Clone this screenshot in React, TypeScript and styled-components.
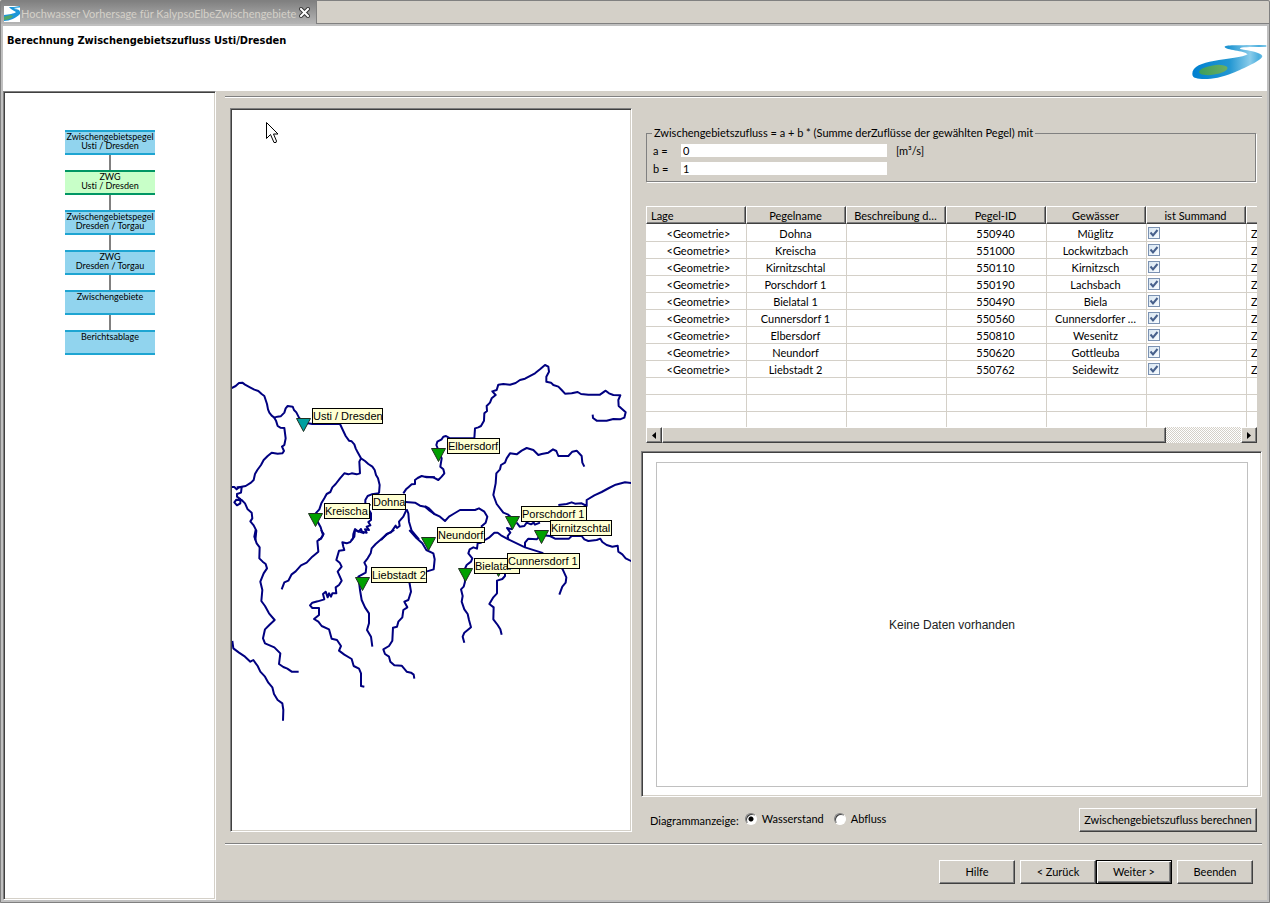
import React, { useState } from "react";
import styled, { createGlobalStyle, css } from "styled-components";

const face = "#d4d0c8";
const shadow = "#808080";
const dark = "#404040";
const light = "#ffffff";
const frame = "#c0c0c0";

const GlobalStyle = createGlobalStyle`
  * { box-sizing: border-box; }
  body {
    margin: 0;
    background: ${face};
    color: #000;
    font-family: Lato, "Liberation Sans", sans-serif;
    font-size: 11px;
    line-height: 14px;
    font-variant-ligatures: none;
  }
  button, input { font: inherit; color: inherit; font-variant-ligatures: none; }
`;

const sunken = css`
  border: 1px solid;
  border-color: ${shadow} ${light} ${light} ${shadow};
  box-shadow: inset 1px 1px 0 ${dark}, inset -1px -1px 0 ${face};
`;

const raised = css`
  border: 1px solid;
  border-color: ${light} ${dark} ${dark} ${light};
  box-shadow: inset -1px -1px 0 ${shadow};
`;

/* ---------- window ---------- */

const Window = styled.div`
  display: flex;
  flex-direction: column;
  min-height: 100vh;
  background: ${face};
  border: 1px solid ${shadow};
  border-radius: 2px 2px 0 0;
`;

const TabBar = styled.div`
  display: flex;
  height: 23px;
  border-bottom: 1px solid ${shadow};
`;

const Tab = styled.div`
  display: flex;
  align-items: center;
  gap: 1px;
  height: 25px;
  padding: 0 5px 0 3px;
  background: linear-gradient(#808080, #bababa);
  border-right: 1px solid ${shadow};
  color: ${face};
`;

const TabTitle = styled.span`
  white-space: nowrap;
`;

const CloseButton = styled.button`
  display: flex;
  margin-left: 2px;
  padding: 0 1px 2px 0;
  border: 0;
  background: none;
`;

const Body = styled.div`
  flex: 1;
  display: flex;
  flex-direction: column;
  border: 2px solid ${frame};
`;

const Header = styled.header`
  display: flex;
  justify-content: space-between;
  align-items: flex-start;
  height: 65px;
  padding: 7px 0 0 4px;
  background: #fff;
`;

const Title = styled.h1`
  margin: 0;
  font-family: "DejaVu Sans Condensed", "DejaVu Sans", sans-serif;
  font-size: 11px;
  line-height: 16px;
  font-weight: bold;
`;

const LogoBox = styled.div`
  display: flex;
  padding-top: 11px;
`;

const Main = styled.div`
  flex: 1;
  display: flex;
  gap: 9px;
`;

/* ---------- workflow ---------- */

const Workflow = styled.nav`
  ${sunken}
  flex: 0 0 213px;
  padding: 38px 0 0 61px;
  background: #fff;
`;

const Steps = styled.ol`
  display: flex;
  flex-direction: column;
  gap: 15px;
  margin: 0;
  padding: 0;
  list-style: none;
`;

const Step = styled.li<{ $active?: boolean }>`
  position: relative;
  width: 90px;
  height: 25px;
  border: solid ${(p) => (p.$active ? "#009664" : "#1ea5d2")};
  border-width: 2px 0;
  background: ${(p) => (p.$active ? "#c8ffc8" : "#91d4ee")};
  font-size: 9px;
  line-height: 9px;
  text-align: center;
  white-space: pre;

  &:not(:first-child)::before {
    content: "";
    position: absolute;
    left: 44px;
    bottom: 100%;
    width: 2px;
    height: 15px;
    margin-bottom: 2px;
    background: ${shadow};
  }
`;

/* ---------- page ---------- */

const Page = styled.div`
  flex: 1;
  min-width: 0;
  display: flex;
  flex-direction: column;
  padding: 5px 5px 16px 0;
`;

const Rule = styled.hr`
  width: 100%;
  height: 2px;
  margin: 0;
  border: 0;
  border-top: 1px solid ${shadow};
  border-bottom: 1px solid ${light};
`;

const Sash = styled.div`
  flex: 1;
  display: grid;
  grid-template-columns: minmax(0, 402fr) minmax(0, 621fr);
  gap: 9px;
  padding: 10px 0 11px 5px;
`;

const MapPanel = styled.div`
  ${sunken}
  position: relative;
  padding: 1px;
  overflow: hidden;
  background: #fff;
`;

const MapDrawing = styled.svg`
  display: block;
  font-family: "Liberation Sans", Arial, sans-serif;
  font-size: 11px;
`;

const Pointer = styled.svg`
  position: absolute;
  left: 35px;
  top: 13px;
`;

const Side = styled.div`
  display: flex;
  flex-direction: column;
  min-width: 0;
`;

const GroupBox = styled.fieldset`
  display: grid;
  grid-template-columns: 28px 206px auto;
  align-content: start;
  align-items: center;
  gap: 5px 0;
  margin: 18px 6px 0 5px;
  padding: 4px 6px 6px 6px;
  border: 1px solid ${shadow};
  box-shadow: 1px 1px 0 ${light};
  min-width: 0;
`;

const Legend = styled.legend`
  padding: 0 2px;
  margin-left: -1px;
  line-height: 14px;
  background: ${face};
`;

const FieldLabel = styled.label`
  line-height: 13px;
`;

const Unit = styled.span`
  padding-left: 9px;
  line-height: 13px;
`;

const NumberInput = styled.input`
  width: 100%;
  height: 13px;
  padding: 0 2px;
  border: 0;
  background: #fff;
`;

/* ---------- table ---------- */

const TableFrame = styled.div`
  margin: 24px 5px 0 5px;
  overflow: hidden;
  background: #fff;
`;

const TableClip = styled.div`
  height: 221px;
  overflow: hidden;
`;

const Table = styled.table`
  width: 800px;
  border-collapse: separate;
  border-spacing: 0;
  table-layout: fixed;
`;

const Th = styled.th<{ $first?: boolean }>`
  ${raised}
  height: 18px;
  padding: 1px 5px 0 4px;
  background: ${face};
  font-weight: normal;
  line-height: 14px;
  text-align: ${(p) => (p.$first ? "left" : "center")};
  white-space: nowrap;
  overflow: hidden;
  text-overflow: ellipsis;
`;

const Td = styled.td<{ $left?: boolean }>`
  height: 17px;
  padding: 1px 6px 0 4px;
  border-left: 1px solid ${face};
  border-bottom: 1px solid ${face};
  line-height: 14px;
  text-align: ${(p) => (p.$left ? "left" : "center")};
  white-space: nowrap;
  overflow: hidden;
  text-overflow: ellipsis;

  tr:first-child > & { height: 18px; padding-top: 2px; }
  &:first-child { border-left: 0; padding: 1px 0 0 5px; }
`;

const CheckCell = styled(Td)`
  padding: 1px 0 0 1px;
  tr:first-child > & { padding-top: 2px; }
`;

const CheckHolder = styled.span`
  position: relative;
  display: block;
  height: 13px;
  margin-bottom: 1px;
`;

const CheckInput = styled.input`
  appearance: none;
  display: block;
  width: 12px;
  height: 12px;
  margin: 0;
  border: 1px solid #7b92b2;
  background: linear-gradient(135deg, #d8e6f2, #f8fcff);
`;

const CheckMark = styled.svg`
  position: absolute;
  left: 0;
  top: 0;
  pointer-events: none;
`;

const ScrollBar = styled.div`
  display: flex;
  height: 16px;
  background: repeating-conic-gradient(${face} 0 25%, #fff 0 50%) 0 0 / 2px 2px;
`;

const ScrollButton = styled.button`
  ${raised}
  display: flex;
  align-items: center;
  justify-content: center;
  flex: 0 0 16px;
  padding: 0;
  background: ${face};
`;

const ScrollTrack = styled.div`
  flex: 1;
  display: flex;
`;

const ScrollThumb = styled.div`
  ${raised}
  flex: 0 0 87%;
  background: ${face};
`;

/* ---------- chart ---------- */

const ChartPanel = styled.div`
  ${sunken}
  flex: 1;
  display: flex;
  min-height: 200px;
  margin-top: 8px;
  padding: 10px 13px 9px 14px;
  background: #fff;
`;

const ChartArea = styled.div`
  flex: 1;
  display: flex;
  align-items: center;
  justify-content: center;
  border: 1px solid ${frame};
  color: #222;
  font-family: "Liberation Sans", Arial, sans-serif;
  font-size: 12px;
`;

const Options = styled.div`
  display: flex;
  align-items: center;
  height: 24px;
  margin: 11px 5px 0 9px;
`;

const OptionsLabel = styled.span`
  margin-right: 6px;
  padding-top: 2px;
`;

const RadioLabel = styled.label`
  display: flex;
  align-items: center;
  gap: 5px;
  height: 14px;
  margin: 0 10px 2px 0;
`;

const RadioInput = styled.input`
  appearance: none;
  width: 12px;
  height: 12px;
  margin: 0;
  border: 1px solid;
  border-color: ${shadow} ${light} ${light} ${shadow};
  border-radius: 50%;
  background: #fff;
  box-shadow: inset 1px 1px 0 ${dark};

  &:checked {
    background: radial-gradient(circle at 5px 5px, #000 2px, #fff 3px);
  }
`;

const Button = styled.button<{ $wide?: boolean; $default?: boolean }>`
  ${raised}
  width: ${(p) => (p.$wide ? "178px" : "76px")};
  height: 24px;
  padding: 0;
  background: ${face};
  white-space: nowrap;
  ${(p) =>
    p.$wide &&
    css`
      margin-left: auto;
    `}
  ${(p) =>
    p.$default &&
    css`
      border-color: #000;
      box-shadow: inset 1px 1px 0 ${light}, inset -1px -1px 0 ${dark},
        inset -2px -2px 0 ${shadow};
    `}
`;

const Footer = styled.footer`
  display: flex;
  justify-content: flex-end;
  gap: 5px;
  padding: 15px 9px 0 0;
`;

const ButtonPair = styled.div`
  display: flex;
`;

/* ---------- data ---------- */

const steps = [
  { text: "Zwischengebietspegel\nUsti / Dresden" },
  { text: "ZWG\nUsti / Dresden", active: true },
  { text: "Zwischengebietspegel\nDresden / Torgau" },
  { text: "ZWG\nDresden / Torgau" },
  { text: "Zwischengebiete" },
  { text: "Berichtsablage" },
];

const columns = [
  "Lage",
  "Pegelname",
  "Beschreibung d…",
  "Pegel-ID",
  "Gewässer",
  "ist Summand",
];

const gauges = [
  ["Dohna", "550940", "Müglitz"],
  ["Kreischa", "551000", "Lockwitzbach"],
  ["Kirnitzschtal", "550110", "Kirnitzsch"],
  ["Porschdorf 1", "550190", "Lachsbach"],
  ["Bielatal 1", "550490", "Biela"],
  ["Cunnersdorf 1", "550560", "Cunnersdorfer …"],
  ["Elbersdorf", "550810", "Wesenitz"],
  ["Neundorf", "550620", "Gottleuba"],
  ["Liebstadt 2", "550762", "Seidewitz"],
];

/* Label boxes; each gauge symbol hangs off the left edge of its label. */
const pins = [
  { name: "Usti / Dresden", x: 80, y: 298, w: 71, fill: "#00a0a0" },
  { name: "Dohna", x: 140, y: 384, w: 34 },
  { name: "Kreischa", x: 92, y: 393, w: 46 },
  { name: "Elbersdorf", x: 215, y: 328, w: 53 },
  { name: "Neundorf", x: 205, y: 417, w: 48 },
  { name: "Liebstadt 2", x: 139, y: 457, w: 56 },
  { name: "Bielatal", x: 242, y: 448, w: 46 },
  { name: "Cunnersdorf 1", x: 275, y: 443, w: 73 },
  { name: "Porschdorf 1", x: 289, y: 396, w: 66 },
  { name: "Kirnitzschtal", x: 318, y: 410, w: 62 },
];

/* River courses per map sheet, in thirds of a pixel from the sheet's corner. */
const sheets = [
  {
    x: -7,
    y: 240,
    rivers: [
      "20,114 32,108 42,99 52,98 60,104 75,112 88,119 100,123 110,132 118,138 122,150 126,162 129,178 133,188 140,197 148,203 157,200 167,199 178,188 182,175 188,168 203,170 207,180 214,187 222,203 240,218 262,222 345,222 352,237 362,258 372,272 380,274 388,283 392,295 398,307 408,325 420,333 430,342 442,350 449,360 453,375 459,385 464,405 462,430",
      "148,203 153,212 158,228 166,233 178,234 182,265 178,285 171,290 177,303 172,310 158,311 140,308 128,318 116,330 108,345 97,360 90,372 86,390 78,398 62,408 42,412 35,418 28,411 20,411",
      "35,412 50,412 48,428 36,432 36,440 46,447 46,460 36,466 28,457 34,449 50,450 60,460 68,478 80,488 82,505 76,514 86,526 94,542 91,571",
      "408,325 403,335 405,370 395,373 380,370 370,373 358,370 345,385 332,402 322,412 316,426 305,432 298,445 289,460 283,478 272,490 278,515 287,532 294,556 288,566 280,570",
      "462,430 440,433 428,438 421,450 421,462 438,490 438,510 430,516 436,526 425,530 432,540 420,538 425,548 411,545 408,537 400,545 390,537 385,552 384,565 378,572",
      "535,430 543,418 552,410 560,403 570,402 570,390 578,384 590,378 605,382 630,382",
      "542,456 570,458 585,467 600,470 614,482 628,492",
      "545,478 550,490 552,515 560,542 570,554 582,568",
      "545,478 535,500 522,515 524,528 516,534 512,527 498,547 485,552 468,570",
    ],
  },
  {
    x: 193,
    y: 240,
    rivers: [
      "0,380 25,382 40,390 50,380 58,370 55,358 46,350 50,325 40,300 34,285 37,275 50,268 55,260 63,258 75,265 122,265 148,265 150,235 160,232 168,228 177,212 178,190 186,183 185,168 195,158 200,145 212,135 202,124 215,120 220,104 235,102 255,104 272,99 285,90 300,86 330,70 345,58 360,45 370,50 372,65 364,80 364,95 378,98 385,105 400,110 410,120 420,131 440,130 458,126 468,132 490,134 525,134 542,122 552,130 565,135 586,136 580,150 581,168 592,178 602,187 598,203 585,208 565,207 545,212 515,212 504,204 503,194",
      "0,468 12,475 28,492 45,500 60,513 72,500 85,492 105,480 150,480 162,475 178,485 187,500 182,518 168,530",
      "478,350 472,338 470,318 455,302 442,305 430,318 400,318 394,303 384,298 370,308 350,312 340,315 325,300 305,294 290,302 275,313 255,310 245,325 240,338 228,345 225,358 214,370 212,400 205,435 215,462 235,488 248,493 262,505",
      "620,399 600,397 572,404 552,414 530,426 508,436 485,450 485,468 470,460 450,461 440,457 425,462 400,465",
    ],
  },
  {
    x: -7,
    y: 420,
    rivers: [
      "92,0 88,20 95,40 104,52 103,85 113,95 122,102 126,115 116,130 106,155 112,180 109,213 120,228 132,250 149,270 133,285 120,298 114,325 120,340 148,352 166,370 162,402 175,411 187,416 200,425 221,425",
      "288,0 296,12 288,25 277,33 280,65 262,80 245,98 228,106 212,124 200,133 190,152 178,157 170,178",
      "418,10 402,5 390,0 388,20 376,36 365,40 352,37 355,50 358,60 342,62 334,90 344,98 350,110 338,125 350,152 342,165 332,172 334,190 322,190 318,200 312,190 308,202 302,185 294,192 298,208 278,214 262,218 255,226 262,234 282,234 282,255 267,267 280,275 290,288 312,298 320,326 336,330 348,348 342,362 358,374 380,387 386,408 402,416 408,430 408,468 418,470",
      "508,0 490,10 472,25 452,42 440,55 437,70 428,85 418,98 424,110 422,128 400,140 405,180 410,210 420,232 432,250 432,280 426,300 438,320 442,350",
      "553,0 575,25 592,40 604,60 625,70 629,88 626,118 606,124",
      "552,150 558,185 550,210 538,215 547,232 535,240 532,262 520,275 516,290 504,293 502,332 492,348 475,358 480,372 492,380 496,395 508,406 530,407 545,425 558,428 566,434 568,446",
      "22,333 25,355 42,368 60,380 76,395 85,390 98,408 106,425 120,440 130,458 142,472 147,492 158,510 172,520 175,540 174,572",
    ],
  },
  {
    x: 193,
    y: 380,
    rivers: [
      "180,150 192,143 208,128 218,128 228,136 250,148 300,172 350,188 390,215 412,236 424,262 422,278 412,290 403,314",
      "250,148 248,138 256,128 246,114 262,118",
      "275,98 284,110 298,108 305,98 318,103 326,98 330,104 345,98",
      "300,172 300,158 310,146 335,148 348,135 375,138 390,146 432,146 440,138 470,138 478,148 490,153 515,150 526,146 532,156 545,165 562,170 578,167 580,185 592,193 602,205 620,214",
      "180,150 168,158 158,160 156,176 145,172 134,178 130,190 142,205 138,215 125,225 118,240 120,275 116,290 108,298 113,318 110,335 118,358 128,372 132,390 138,412 118,428 113,440 118,458",
      "240,245 240,258 232,267 216,272 216,310 205,322 193,342 206,352 205,388 218,405 226,418 230,434",
    ],
  },
];

/* ---------- drawings ---------- */

const Logo = () => (
  <svg width="75" height="36" viewBox="68 132 225 108" aria-hidden="true">
    <defs>
      <linearGradient id="river" x1="0" x2="1" y1="0" y2="0">
        <stop offset="0" stopColor="#0080d0" />
        <stop offset="0.5" stopColor="#2196d2" />
        <stop offset="0.78" stopColor="#8accea" />
        <stop offset="0.9" stopColor="#4aaede" />
        <stop offset="1" stopColor="#8accea" />
      </linearGradient>
      <linearGradient id="lake" x1="0" x2="1" y1="0" y2="0">
        <stop offset="0" stopColor="#3c9e5c" />
        <stop offset="1" stopColor="#6cae62" />
      </linearGradient>
    </defs>
    <path
      fill="url(#river)"
      d="M69 221C68 200 100 188 133 183C175 176 222 172 235 163C226 152 168 150 166 141C166 134 200 136 291 135V141C250 141 204 140 213 147C240 152 276 158 279 168C280 180 222 206 190 219C150 236 112 239 90 236C74 234 69 230 69 221Z"
    />
    <ellipse cx="132" cy="210" rx="43" ry="14" fill="url(#lake)" transform="rotate(-9 132 210)" />
  </svg>
);

const TabIcon = () => (
  <svg width="16" height="16" viewBox="0 0 16 16" aria-hidden="true">
    <rect width="16" height="16" fill="#fff" />
    <path
      d="M5 1C8 1 12 1 16 0V2C13 2 11 2 10 3C14 3 16 4 16 6V8C12 12 6 15 0 15V9C5 8 10 8 12 6C9 4 6 3 5 1Z"
      fill="#1c96d8"
    />
    <path d="M9 2H16V1Z" fill="#8fd6f2" />
    <path d="M0 11C4 9 8 9 9 10C8 12 4 14 0 14Z" fill="#4fa66a" />
  </svg>
);

const CloseIcon = () => (
  <svg width="11" height="11" viewBox="0 0 11 11" aria-hidden="true">
    <path d="M2 2L9 9M9 2L2 9" stroke="#333" strokeWidth="4" strokeLinecap="square" />
    <path d="M2 2L9 9M9 2L2 9" stroke="#fff" strokeWidth="2" strokeLinecap="square" />
  </svg>
);

const Arrow = ({ right }: { right?: boolean }) => (
  <svg width="4" height="7" viewBox="0 0 4 7" aria-hidden="true">
    <path d={right ? "M0 0L4 3.5L0 7Z" : "M4 0L0 3.5L4 7Z"} />
  </svg>
);

const RiverMap = () => (
  <MapDrawing width="400" height="720" role="img" aria-label="Pegelkarte">
    <g
      fill="none"
      stroke="#000080"
      strokeWidth="6"
      strokeLinejoin="round"
      shapeRendering="geometricPrecision"
    >
      {sheets.map((s, i) => (
        <g key={i} transform={`translate(${s.x} ${s.y}) scale(${1 / 3})`}>
          {s.rivers.map((r) => (
            <polyline key={r} points={r} />
          ))}
        </g>
      ))}
    </g>
    {pins.map((p) => (
      <path
        key={p.name}
        transform={`translate(${p.x - 15} ${p.y + 10})`}
        d="M-0.5 0.5H13.5L6.5 13.5Z"
        fill={p.fill ?? "#00a000"}
        stroke="#203020"
      />
    ))}
    {pins.map((p) => (
      <g key={p.name} transform={`translate(${p.x} ${p.y})`}>
        <rect x="0.5" y="0.5" width={p.w - 1} height="15" fill="#ffffd2" stroke="#000" />
        <text x="1" y="12">
          {p.name}
        </text>
      </g>
    ))}
  </MapDrawing>
);

const Check = ({ label }: { label: string }) => {
  const [on, setOn] = useState(true);
  return (
    <CheckHolder>
      <CheckInput
        type="checkbox"
        aria-label={label}
        checked={on}
        onChange={(e) => setOn(e.target.checked)}
      />
      {on && (
        <CheckMark width="12" height="12" viewBox="0 0 12 12" aria-hidden="true">
          <path d="M2.5 5.5L5 8.5L9.5 3" fill="none" stroke="#47608c" strokeWidth="2" />
        </CheckMark>
      )}
    </CheckHolder>
  );
};

const emptyRows = [0, 1, 2];

export default function App() {
  const [a, setA] = useState("0");
  const [b, setB] = useState("1");
  const [mode, setMode] = useState("Wasserstand");

  return (
    <>
      <GlobalStyle />
      <Window>
        <TabBar>
          <Tab>
            <TabIcon />
            <TabTitle>Hochwasser Vorhersage für KalypsoElbeZwischengebiete</TabTitle>
            <CloseButton aria-label="Schließen">
              <CloseIcon />
            </CloseButton>
          </Tab>
        </TabBar>
        <Body>
          <Header>
            <Title>Berechnung Zwischengebietszufluss Usti/Dresden</Title>
            <LogoBox>
              <Logo />
            </LogoBox>
          </Header>
          <Main>
            <Workflow>
              <Steps>
                {steps.map((s, i) => (
                  <Step key={i} $active={s.active}>
                    {s.text}
                  </Step>
                ))}
              </Steps>
            </Workflow>
            <Page>
              <Rule />
              <Sash>
                <MapPanel>
                  <RiverMap />
                  <Pointer width="13" height="22" viewBox="0 0 13 22" aria-hidden="true">
                    <path
                      d="M0.5 0.5V16.5L4.5 12.5L8 20.5H10L10.5 19L7.5 12H12Z"
                      fill="#fff"
                      stroke="#000"
                    />
                  </Pointer>
                </MapPanel>
                <Side>
                  <GroupBox>
                    <Legend>
                      Zwischengebietszufluss = a + b * (Summe derZuflüsse der gewählten Pegel) mit
                    </Legend>
                    <FieldLabel htmlFor="coef-a">a =</FieldLabel>
                    <NumberInput id="coef-a" value={a} onChange={(e) => setA(e.target.value)} />
                    <Unit>[m³/s]</Unit>
                    <FieldLabel htmlFor="coef-b">b =</FieldLabel>
                    <NumberInput id="coef-b" value={b} onChange={(e) => setB(e.target.value)} />
                  </GroupBox>
                  <TableFrame>
                    <TableClip>
                      <Table>
                        <colgroup>
                          {columns.map((c) => (
                            <col key={c} width="100" />
                          ))}
                          <col />
                        </colgroup>
                        <thead>
                          <tr>
                            {columns.map((c, i) => (
                              <Th key={c} $first={i === 0}>
                                {c}
                              </Th>
                            ))}
                            <Th />
                          </tr>
                        </thead>
                        <tbody>
                          {gauges.map(([name, id, water]) => (
                            <tr key={id}>
                              <Td>&lt;Geometrie&gt;</Td>
                              <Td>{name}</Td>
                              <Td />
                              <Td>{id}</Td>
                              <Td>{water}</Td>
                              <CheckCell>
                                <Check label={`${name} ist Summand`} />
                              </CheckCell>
                              <Td $left>Z</Td>
                            </tr>
                          ))}
                          {emptyRows.map((r) => (
                            <tr key={r}>
                              <Td />
                              <Td />
                              <Td />
                              <Td />
                              <Td />
                              <Td />
                              <Td />
                            </tr>
                          ))}
                        </tbody>
                      </Table>
                    </TableClip>
                    <ScrollBar>
                      <ScrollButton aria-label="Nach links">
                        <Arrow />
                      </ScrollButton>
                      <ScrollTrack>
                        <ScrollThumb />
                      </ScrollTrack>
                      <ScrollButton aria-label="Nach rechts">
                        <Arrow right />
                      </ScrollButton>
                    </ScrollBar>
                  </TableFrame>
                  <ChartPanel>
                    <ChartArea>Keine Daten vorhanden</ChartArea>
                  </ChartPanel>
                  <Options role="radiogroup" aria-labelledby="mode-label">
                    <OptionsLabel id="mode-label">Diagrammanzeige:</OptionsLabel>
                    {["Wasserstand", "Abfluss"].map((m) => (
                      <RadioLabel key={m}>
                        <RadioInput
                          type="radio"
                          name="mode"
                          checked={mode === m}
                          onChange={() => setMode(m)}
                        />
                        {m}
                      </RadioLabel>
                    ))}
                    <Button $wide>Zwischengebietszufluss berechnen</Button>
                  </Options>
                </Side>
              </Sash>
              <Rule />
              <Footer>
                <Button>Hilfe</Button>
                <ButtonPair>
                  <Button>&lt; Zurück</Button>
                  <Button $default>Weiter &gt;</Button>
                </ButtonPair>
                <Button>Beenden</Button>
              </Footer>
            </Page>
          </Main>
        </Body>
      </Window>
    </>
  );
}
